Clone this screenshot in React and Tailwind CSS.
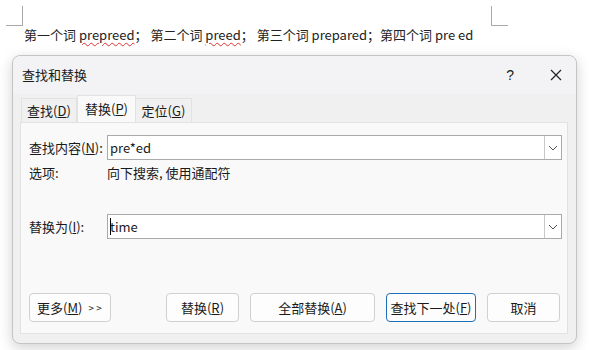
import React from 'react';

const font = { fontFamily: '"Noto Sans CJK SC", "Noto Sans", sans-serif' };

function Chevron() {
    return (
        <svg width="10" height="6" viewBox="0 0 10 6" fill="none">
            <path d="M1 1l4 4 4-4" stroke="#555" strokeWidth="1" />
        </svg>
    );
}

function Combo({ value, caret }) {
    return (
        <div className="flex h-[25px] flex-1 items-stretch border border-[#aaaaaa] bg-white">
            <div className="flex flex-1 items-center pl-[2px] text-[13px] text-[#1a1a1a]">
                {caret && <span className="mr-[-1px] inline-block h-[17px] w-px bg-black" />}
                {value}
            </div>
            <div className="flex w-[17px] items-center justify-center border-l border-[#c8c8c8] bg-white">
                <Chevron />
            </div>
        </div>
    );
}

function Btn({ children, className = '' }) {
    return (
        <div className={`flex h-[29px] shrink-0 items-center justify-center whitespace-nowrap rounded-[4px] border bg-[#fdfdfd] text-[13px] text-[#1a1a1a] ${className}`}>
            {children}
        </div>
    );
}

export default function App() {
    return (
        <div className="relative h-[350px] w-[589px] overflow-hidden bg-white" style={font}>
            {/* page */}
            <div className="relative h-[55px]">
                <div className="absolute left-[6px] top-[6px] h-[20px] w-[17px] border-b border-r border-[#a8a8a8]" />
                <div className="absolute left-[491px] top-[6px] h-[20px] w-[17px] border-b border-l border-[#a8a8a8]" />
                <div className="pl-[24px] pt-[26px] text-[13px] leading-[18px] text-[#222]">
                    第一个词 <span className="underline decoration-wavy decoration-[#e03030] decoration-1 underline-offset-2">prepreed</span>；
                    第二个词 <span className="underline decoration-wavy decoration-[#e03030] decoration-1 underline-offset-2">preed</span>；
                    第三个词 prepared；第四个词 pre ed
                </div>
            </div>

            {/* dialog */}
            <div className="ml-[12px] flex h-[289px] w-[565px] flex-col rounded-[8px] border border-[#c4c4c4] bg-[#f0f0f0] shadow-[0_4px_14px_rgba(0,0,0,0.18)]">
                <div className="flex h-[38px] items-center rounded-t-[8px] bg-[#f3f3f5] pl-[9px] pr-[14px] text-[13px] text-[#1a1a1a]">
                    <span className="flex-1">查找和替换</span>
                    <span className="mr-[36px] text-[14px]" style={{ fontFamily: '"Liberation Sans", sans-serif' }}>?</span>
                    <svg width="12" height="12" viewBox="0 0 12 12">
                        <path d="M1 1l10 10M11 1L1 11" stroke="#222" strokeWidth="1.2" />
                    </svg>
                </div>

                <div className="flex h-[28px] items-end pl-[8px] text-[13px] leading-[18px] text-[#1a1a1a]">
                    <div className="flex h-[24px] w-[56px] items-center justify-center border border-b-0 border-[#e2e2e2] bg-[#f0f0f0]">
                        查找(<span className="underline">D</span>)
                    </div>
                    <div className="flex h-[27px] w-[59px] items-center justify-center border border-b-0 border-[#e2e2e2] bg-[#f9f9f9]">
                        替换(<span className="underline">P</span>)
                    </div>
                    <div className="flex h-[24px] w-[56px] items-center justify-center border border-b-0 border-l-0 border-[#e2e2e2] bg-[#f0f0f0]">
                        定位(<span className="underline">G</span>)
                    </div>
                </div>

                <div className="ml-[7px] mr-[8px] flex h-[212px] flex-col border border-[#e2e2e2] bg-[#f9f9f9] pl-[8px] pr-[5px] pt-[12px] text-[13px] leading-[18px] text-[#1a1a1a]">
                    <div className="flex items-center">
                        <span className="w-[78px]">查找内容(<span className="underline">N</span>):</span>
                        <Combo value="pre*ed" />
                    </div>
                    <div className="mt-[4px] flex">
                        <span className="w-[78px]">选项:</span>
                        <span>向下搜索, 使用通配符</span>
                    </div>
                    <div className="mt-[32px] flex items-center">
                        <span className="w-[78px]">替换为(<span className="underline">I</span>):</span>
                        <Combo value="time" caret />
                    </div>

                    <div className="mt-[54px] flex items-center pr-[1px]">
                        <Btn className="w-[82px] justify-start gap-[6px] border-[#d0d0d0] pl-[7px]">
                            <span>更多(<span className="underline">M</span>)</span>
                            <span className="text-[10px]">&gt; &gt;</span>
                        </Btn>
                        <Btn className="ml-[55px] w-[73px] border-[#d0d0d0]">替换(<span className="underline">R</span>)</Btn>
                        <Btn className="ml-[11px] w-[125px] border-[#d0d0d0]">全部替换(<span className="underline">A</span>)</Btn>
                        <Btn className="ml-[11px] w-[90px] border-[#1f6fb8]">查找下一处(<span className="underline">F</span>)</Btn>
                        <Btn className="ml-[11px] w-[73px] border-[#d0d0d0]">取消</Btn>
                    </div>
                </div>
            </div>
        </div>
    );
}
